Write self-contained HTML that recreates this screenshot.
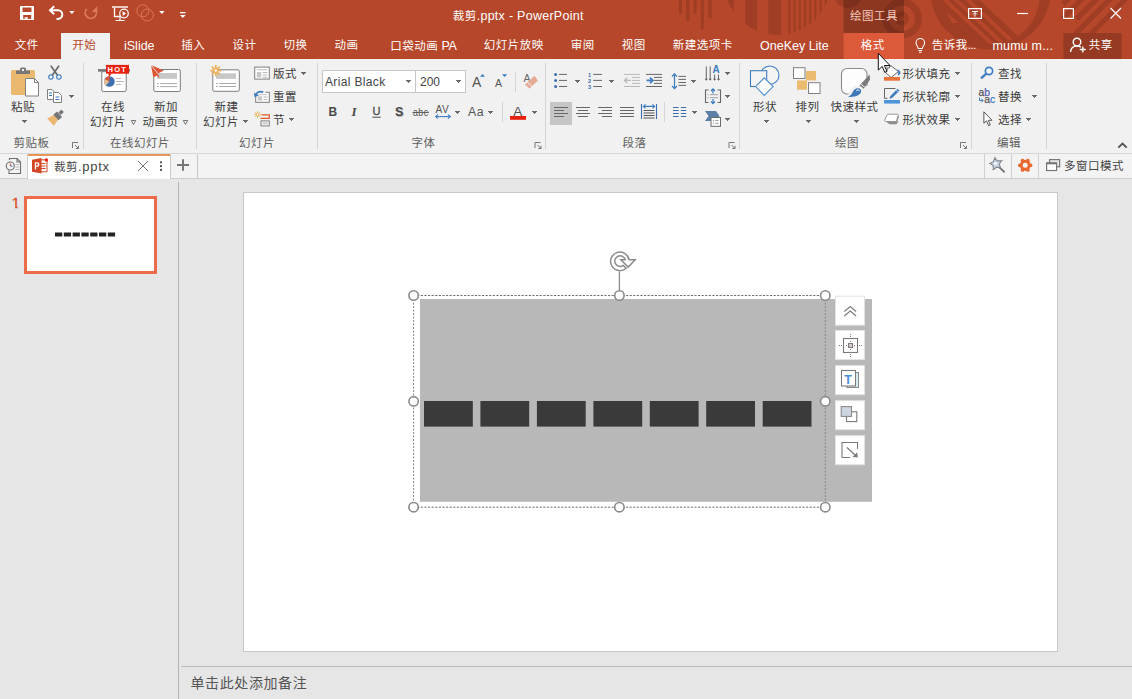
<!DOCTYPE html>
<html><head><meta charset="utf-8">
<style>
*{box-sizing:border-box;margin:0;padding:0}
html,body{width:1132px;height:699px;overflow:hidden;background:#e6e6e6}
body{position:relative;font-family:"Liberation Sans","Noto Sans CJK SC",sans-serif;font-size:11.5px;letter-spacing:.5px;color:#3b3b3b}
.abs{position:absolute}
#title{left:0;top:0;width:1132px;height:59px;background:#b7472a}
#ribbon{left:0;top:59px;width:1132px;height:94px;background:#f1f1f1}
#tabbar{left:0;top:153px;width:1132px;height:26px;background:#f3f3f3;border-top:1px solid #d6d6d6;border-bottom:1px solid #d0d0d0}
#left{left:0;top:179px;width:178px;height:520px;background:#e6e6e6}
#vdiv{left:178px;top:186px;width:1px;height:513px;background:#c6c6c6}
#slide{left:244px;top:192px;width:814px;height:459px;background:#fff;border:1px solid #cfcfcf}
#notesline{left:179px;top:666px;width:953px;height:1px;background:#cfcfcf}
.t{position:absolute;white-space:nowrap;line-height:1}
.w{color:#fff}
.l{font-size:12.5px;letter-spacing:0}
.g{color:#5e5e5e}
.sep{position:absolute;width:1px;background:#d4d4d4}
.ar{position:absolute;width:5px;height:1px;background:#6a6a6a}
.ar::before{content:"";position:absolute;left:1px;top:1px;width:3px;height:1px;background:#6a6a6a}
.ar::after{content:"";position:absolute;left:2px;top:2px;width:1px;height:1px;background:#6a6a6a}
</style></head><body>
<div id="title" class="abs">
<svg class="abs" style="left:0;top:0" width="1132" height="59" viewBox="0 0 1132 59">
 <defs>
  <clipPath id="semi"><circle cx="777.700" cy="-18.500" r="53.300"/></clipPath>
  <clipPath id="bigc"><circle cx="988" cy="-9" r="50"/></clipPath>
 </defs>
 <g fill="#9f3d25">
  <rect x="679" y="0" width="3" height="13.500"/><rect x="686.200" y="0" width="3.300" height="21"/>
  <rect x="693.700" y="0" width="3" height="13.800"/><rect x="700.800" y="0" width="3" height="29.700"/>
  <rect x="708.300" y="0" width="3.400" height="18"/>
  <g clip-path="url(#semi)">
   <rect x="725" y="0" width="8.800" height="40"/>
   <rect x="745.100" y="0" width="12" height="40"/>
   <rect x="768.400" y="0" width="12.700" height="40"/>
   <rect x="788.3" y="0" width="2.200" height="40"/><rect x="793.5" y="0" width="2.200" height="40"/><rect x="798.7" y="0" width="2.200" height="40"/><rect x="803.9" y="0" width="2.200" height="40"/><rect x="809.1" y="0" width="2.200" height="40"/><rect x="814.3" y="0" width="2.200" height="40"/><rect x="819.5" y="0" width="2.200" height="40"/><rect x="824.7" y="0" width="2.200" height="40"/>
  </g>
  <circle cx="848" cy="-7" r="15"/>
 </g>
 <!-- concentric rings -->
 <g fill="none" stroke="#9f3d25">
  <circle cx="902" cy="18.500" r="16.400" stroke-width="7"/>
  <circle cx="902" cy="18.500" r="4.700" stroke-width="4.400"/>
 </g>
 <!-- big circle -->
 <defs><clipPath id="bigi"><circle cx="991.700" cy="-3.700" r="47.800"/></clipPath></defs>
 <circle cx="990.500" cy="-11" r="60.500" fill="#9f3d25"/>
 <circle cx="991.700" cy="-3.700" r="47.800" fill="#b7472a"/>
 <g clip-path="url(#bigi)" fill="#9f3d25"><polygon points="925,23 958.500,23 1002,64 925,64"/><polygon points="907.5,-25 915.5,-25 1017.1,70 1009.1,70"/><polygon points="921.1,-25 926.7,-25 1028.3,70 1022.7,70"/><polygon points="932.2,-25 938.4,-25 1040.0,70 1033.8,70"/><polygon points="944.0,-25 952.6,-25 1054.2,70 1045.6,70"/></g>
 <!-- right stripes -->
 <g stroke="#9f3d25" stroke-width="5.200"><line x1="1073.2" y1="-6" x2="1063.1" y2="4.1"/><line x1="1087.0" y1="-6" x2="1062.1" y2="18.9"/><line x1="1101.5" y1="-6" x2="1076.6" y2="18.9"/><line x1="1115.3" y1="-6" x2="1064.3" y2="45.0"/><line x1="1130.6" y1="-6" x2="1079.6" y2="45.0"/></g>
 <!-- drawing tools band -->
 <rect x="843.500" y="0" width="60.500" height="33" fill="#000" opacity=".22"/>
 <rect x="843.500" y="33" width="60.500" height="26" fill="#dc5939"/>
 <!-- active tab -->
 <rect x="61" y="33" width="49" height="26" fill="#f1f1f1"/>
 <!-- share btn -->
 <rect x="1063.400" y="33" width="58.200" height="26" fill="#973a24"/>
 <!-- QAT icons -->
 <rect x="20" y="6" width="14" height="14" rx=".8" fill="#fff"/>
 <rect x="22.500" y="7.500" width="9" height="4.500" fill="#b7472a"/>
 <rect x="23.200" y="15" width="8" height="3.900" fill="#b7472a"/>
 <rect x="24.700" y="17.200" width="3" height="1.700" fill="#fff"/>
 <g fill="none" stroke="#fff">
  <path d="M50.500 10.300h7.500a4.300 4.300 0 0 1 0 8.600h-1.500" stroke-width="2"/><path d="M54.200 6.300l-4.200 4 4.200 4" stroke-width="2"/>
  <g stroke="#dc7a5f"><path d="M86.800 8.800a5.600 5.600 0 1 0 8.700 .9" stroke-width="1.800"/><path d="M97.300 6.300v5.600h-5.600z" fill="#dc7a5f" stroke="none"/></g>
  <path d="M112 7h16" stroke-width="1.400"/><path d="M114.500 7.500v9h6" stroke-width="1.300"/><path d="M120 17v3.500M115.500 20.500h9" stroke-width="1.200"/>
  <circle cx="124" cy="13.500" r="4.300" stroke-width="1.200"/>
  <g stroke="#dd7a5e" stroke-width=".9"><circle cx="142.800" cy="10.800" r="6"/><circle cx="147.300" cy="15" r="6"/></g>
 </g>
 <g fill="#fff">
  <path d="M69.200 11h5.400l-2.700 3.100z"/><path d="M159.200 11h5.400l-2.700 3.100z"/>
  <path d="M180 12h5.600v1.300H180z"/><path d="M180 15h5.600l-2.800 3z"/>
  <path d="M122.600 11.300l3.600 2.200-3.600 2.200z"/>
 </g>
 <!-- window controls -->
 <g fill="none" stroke="#fff" stroke-width="1.2">
  <rect x="968.600" y="8.600" width="12.800" height="9.800"/><path d="M972 11.500h6" stroke-width="1.100"/><path d="M975 16.500v-4M973 14.500l2-2 2 2" stroke-width="1"/>
  <path d="M1017 13.5h11"/>
  <rect x="1063.6" y="8.6" width="9.8" height="9.8"/>
  <path d="M1110.5 8l10.5 10.5M1121 8l-10.5 10.5"/>
 </g>
 <!-- bulb -->
 <g fill="none" stroke="#fff" stroke-width="1.1">
  <path d="M918.3 48.5c0-2-2.3-2.8-2.3-5.7a4.3 4.3 0 0 1 8.6 0c0 2.900-2.300 3.700-2.300 5.700z"/><path d="M918.500 50.500h3.600M919 52.300h2.600"/>
 </g>
 <!-- share icon -->
 <g fill="none" stroke="#fff" stroke-width="1.4">
  <circle cx="1077" cy="42" r="3.8"/><path d="M1070.500 52c.4-4 3-6 6.500-6 1.500 0 2.800.4 3.800 1.200"/><path d="M1082.800 46.500v6M1079.800 49.500h6" stroke-width="1.3"/>
 </g>
</svg>
<span class="t w" style="left:452.700px;top:10px">裁剪<span style="font-size:12.500px;letter-spacing:.27px">.pptx - PowerPoint</span></span>
<span class="t" style="left:850px;top:10.500px;color:#f3c9bd">绘图工具</span>
<span class="t w" style="left:14.700px;top:40px">文件</span>
<span class="t" style="left:72.300px;top:40px;color:#b7472a">开始</span>
<span class="t w l" style="left:124px;top:40px">iSlide</span>
<span class="t w" style="left:181.300px;top:40px">插入</span>
<span class="t w" style="left:232.500px;top:40px">设计</span>
<span class="t w" style="left:283.500px;top:40px">切换</span>
<span class="t w" style="left:334.500px;top:40px">动画</span>
<span class="t w" style="left:390.300px;top:40px">口袋动画<span class="l" style="letter-spacing:-.3px"> PA</span></span>
<span class="t w" style="left:483.700px;top:40px">幻灯片放映</span>
<span class="t w" style="left:570.700px;top:40px">审阅</span>
<span class="t w" style="left:621.700px;top:40px">视图</span>
<span class="t w" style="left:672.700px;top:40px">新建选项卡</span>
<span class="t w l" style="left:760px;top:40px">OneKey Lite</span>
<span class="t w" style="left:860.700px;top:40px">格式</span>
<span class="t w" style="left:931.700px;top:40px">告诉我<span style="letter-spacing:-.4px">...</span></span>
<span class="t w l" style="left:992.500px;top:40px;letter-spacing:.18px">mumu m...</span>
<span class="t w" style="left:1088.700px;top:40px">共享</span>
</div>
<div id="ribbon" class="abs"></div>
<!--RIBTEXT-->
<i class="sep" style="left:83px;top:63px;height:86px"></i>
<i class="sep" style="left:196px;top:63px;height:86px"></i>
<i class="sep" style="left:317px;top:63px;height:86px"></i>
<i class="sep" style="left:545px;top:63px;height:86px"></i>
<i class="sep" style="left:739px;top:63px;height:86px"></i>
<i class="sep" style="left:971px;top:63px;height:86px"></i>
<i class="sep" style="left:1046px;top:63px;height:86px"></i>
<i class="sep" style="left:515px;top:72px;height:20px"></i>
<i class="sep" style="left:502px;top:102px;height:20px"></i>
<i class="sep" style="left:664px;top:102px;height:20px"></i>
<span class="t g" style="left:13.5px;top:138px">剪贴板</span>
<span class="t g" style="left:110px;top:138px">在线幻灯片</span>
<span class="t g" style="left:239px;top:138px">幻灯片</span>
<span class="t g" style="left:411.5px;top:138px">字体</span>
<span class="t g" style="left:622.5px;top:138px">段落</span>
<span class="t g" style="left:835px;top:138px">绘图</span>
<span class="t g" style="left:997px;top:138px">编辑</span>
<span class="t" style="left:11px;top:102px">粘贴</span>
<i class="ar" style="left:22px;top:120px"></i>
<i class="ar" style="left:69px;top:95px"></i>
<span class="t" style="left:101px;top:102px">在线</span>
<span class="t" style="left:90px;top:117px">幻灯片</span>
<span class="t" style="left:154px;top:102px">新加</span>
<span class="t" style="left:142.5px;top:117px">动画页</span>
<span class="t" style="left:214.5px;top:102px">新建</span>
<span class="t" style="left:203px;top:117px">幻灯片</span>
<i class="ar" style="left:243px;top:120px"></i>
<span class="t" style="left:273px;top:69px">版式</span>
<i class="ar" style="left:301px;top:72px"></i>
<span class="t" style="left:273px;top:92px">重置</span>
<span class="t" style="left:273px;top:115px">节</span>
<i class="ar" style="left:289px;top:118px"></i>
<div class="abs" style="left:322px;top:70px;width:94px;height:23px;background:#fff;border:1px solid #c6c6c6"></div>
<div class="abs" style="left:415px;top:70px;width:51px;height:23px;background:#fff;border:1px solid #c6c6c6"></div>
<span class="t" style="left:325px;top:75.500px;font-size:12px;letter-spacing:.35px;color:#444">Arial Black</span>
<i class="ar" style="left:406px;top:80px"></i>
<span class="t" style="left:420px;top:75.500px;font-size:12px;letter-spacing:0;color:#444">200</span>
<i class="ar" style="left:456px;top:80px"></i>
<i class="ar" style="left:455px;top:111px"></i>
<i class="ar" style="left:488px;top:111px"></i>
<i class="ar" style="left:532px;top:111px"></i>
<div class="abs" style="left:550px;top:102px;width:22px;height:23px;background:#c6c6c6"></div>
<i class="ar" style="left:575px;top:80px"></i>
<i class="ar" style="left:609px;top:80px"></i>
<i class="ar" style="left:691px;top:80px"></i>
<i class="ar" style="left:725px;top:72px"></i>
<i class="ar" style="left:725px;top:95px"></i>
<i class="ar" style="left:725px;top:118px"></i>
<i class="ar" style="left:692px;top:111px"></i>
<span class="t" style="left:753px;top:102px">形状</span>
<i class="ar" style="left:764px;top:120px"></i>
<span class="t" style="left:795.5px;top:102px">排列</span>
<i class="ar" style="left:806px;top:120px"></i>
<span class="t" style="left:830.5px;top:102px">快速样式</span>
<i class="ar" style="left:854px;top:120px"></i>
<span class="t" style="left:902.5px;top:69px">形状填充</span>
<i class="ar" style="left:955px;top:72px"></i>
<span class="t" style="left:902.5px;top:92px">形状轮廓</span>
<i class="ar" style="left:955px;top:95px"></i>
<span class="t" style="left:902.5px;top:115px">形状效果</span>
<i class="ar" style="left:955px;top:118px"></i>
<span class="t" style="left:998px;top:69px">查找</span>
<span class="t" style="left:998px;top:92px">替换</span>
<i class="ar" style="left:1032px;top:95px"></i>
<span class="t" style="left:998px;top:115px">选择</span>
<i class="ar" style="left:1026px;top:118px"></i>
<!--/RIBTEXT-->
<!--RIBICONS--><svg class="abs" style="left:0;top:0;pointer-events:none" width="1132" height="699" viewBox="0 0 1132 699">
<!-- clipboard group -->
<g>
 <rect x="11" y="70" width="24" height="25" rx="1.5" fill="#eab96f"/>
 <path d="M16 74v-3.500h4v-1.500a1.500 1.500 0 0 1 1.500-1.500h3a1.500 1.500 0 0 1 1.500 1.500v1.500h4V74z" fill="#787878"/>
 <rect x="22" y="69" width="2" height="2" fill="#f1f1f1"/>
 <path d="M25.500 78.500h9l4 4v13.500h-13z" fill="#fff" stroke="#808080" stroke-width="1"/>
 <path d="M34.500 78.500v4h4" fill="none" stroke="#808080" stroke-width="1"/>
 <!-- scissors -->
 <path d="M50.800 65.800l6.700 9.400M59 65.800l-6.700 9.400" stroke="#6a6a6a" stroke-width="1.700" fill="none"/>
 <circle cx="50.900" cy="77" r="2.200" fill="none" stroke="#3a7bbf" stroke-width="1.100"/>
 <circle cx="58.900" cy="77" r="2.200" fill="none" stroke="#3a7bbf" stroke-width="1.100"/>
 <!-- copy -->
 <path d="M47.500 89.500h4.500l2.500 2.500v7.500h-7z" fill="#fff" stroke="#808080"/>
 <path d="M53.500 92.500h5l3 3v7h-8z" fill="#fff" stroke="#808080"/>
 <path d="M49 93h3M49 95.500h3M55.500 97h4M55.500 99.500h4" stroke="#3a7bbf" stroke-width="1" fill="none"/>
 <!-- format painter -->
 <path d="M47.200 118.400l6.600-3.300 4.400 4.600-4.400 6z" fill="#ecb76f"/>
 <path d="M53.300 114.800l3.600-3.400 5.200 5.500-3.600 3.400z" fill="#777"/>
 <path d="M58.400 112.400l3-2.800 2.400 2.500-3 2.800z" fill="#777"/>
</g>
<!-- online slides -->
<g>
 <rect x="98" y="69" width="32" height="2.700" fill="#7d7d7d"/>
 <path d="M101.800 71.700v18.300a1.500 1.500 0 0 0 1.500 1.500h21.400a1.500 1.500 0 0 0 1.500-1.500v-18.300z" fill="#fff" stroke="#7d7d7d" stroke-width="1"/>
 <circle cx="109.400" cy="81.500" r="5.300" fill="#3f6fb0"/>
 <path d="M109.400 81.500l-5.200 1.200a5.300 5.300 0 0 1 .5-3.700z" fill="#f0c48c"/>
 <path d="M109.400 81.500l-5.250 1.200a5.300 5.300 0 0 0 1.600 2.700z" fill="#f0c48c"/>
 <path d="M109.400 81.500l-4.700-2.500a5.300 5.300 0 0 1 5.300-2.770z" fill="#d9593a"/>
 <path d="M116 78.500h5M116 81.500h8M116 84.500h5" stroke="#bdbdbd" stroke-width="1" fill="none"/>
 <path d="M106 64.900h23v8.800h-23z" fill="#e8210e"/>
 <path d="M108.400 73.500h3.300l-2.800 3.400z" fill="#e8210e"/>
</g>
<!-- new animation page -->
<g>
 <rect x="153.800" y="69.500" width="26.500" height="22" rx="1.500" fill="#fff" stroke="#7d7d7d"/>
 <rect x="157" y="73" width="20" height="5.800" fill="#c8c8c8"/>
 <path d="M157 83.600h1.800M160.200 83.600h16.800M157 86.600h1.800M160.200 86.600h16.800" stroke="#a9a9a9" stroke-width="1" fill="none"/>
 <path d="M151 64.900l12.800 5.500-4.800 2.600-1.100 .8 1.900 4.400-3-2.600-1.300 .9-2.300 .6z" fill="#dd5534"/>
 <path d="M151 64.900l6.900 8.900" stroke="#f1f1f1" stroke-width=".8"/>
</g>
<!-- hollow dropdown triangles -->
<g fill="none" stroke="#666" stroke-width=".9"><path d="M131.300 120.500h4.400l-2.200 4z"/><path d="M183.300 120.500h4.400l-2.200 4z"/></g>
<!-- new slide -->
<g>
 <rect x="212.800" y="69.800" width="26.500" height="21.500" rx="1.500" fill="#fff" stroke="#7d7d7d"/>
 <rect x="216" y="73.300" width="20" height="5.600" fill="#c8c8c8"/>
 <path d="M216 83.500h1.800M219.200 83.500h16.800M216 86.500h1.800M219.200 86.500h16.800" stroke="#a9a9a9" stroke-width="1" fill="none"/>
 <g stroke="#eeb05c" stroke-width="1.800"><path d="M215.800 65v11.200M210.200 70.600h11.200M211.800 66.600l8 8M219.800 66.600l-8 8"/></g>
 <circle cx="215.800" cy="70.600" r="1.600" fill="#fff" stroke="#eeb05c" stroke-width=".8"/>
</g>
<!-- layout -->
<g>
 <rect x="254.700" y="67.100" width="14.600" height="12" fill="#fff" stroke="#7d7d7d"/>
 <path d="M256.800 69.700h10.500" stroke="#c0c0c0" stroke-width="1"/>
 <rect x="256.800" y="72" width="4.400" height="5.500" fill="#c8c8c8"/>
 <path d="M262.700 72.500h4.600M262.700 75h4.600M262.700 77.300h4.600" stroke="#b0b0b0" stroke-width=".9"/>
</g>
<!-- reset -->
<g>
 <rect x="255.700" y="92.300" width="13.600" height="10" fill="#fff" stroke="#7d7d7d"/>
 <path d="M258 94.700h9" stroke="#c0c0c0"/><rect x="257.700" y="96.300" width="4.500" height="4.300" fill="#c8c8c8"/>
 <path d="M263.500 97h4M263.500 99.500h4" stroke="#b0b0b0" stroke-width=".9"/>
 <path d="M253.500 89.500h12v4h-8v3h-4z" fill="#f1f1f1"/>
 <path d="M256 95.500c.5-3 3.500-5 7.200-3.200" fill="none" stroke="#3a7bbf" stroke-width="1.700"/>
 <path d="M254 92.600l.6 4.600 4.200-1.800z" fill="#3a7bbf"/>
</g>
<!-- section -->
<g>
 <g stroke="#eeb05c" stroke-width="1"><path d="M257.600 111.200v6.800M254.200 114.600h6.800M255.200 112.200l4.800 4.800M260 112.200l-4.800 4.800"/></g>
 <circle cx="257.600" cy="114.600" r="1" fill="#fff"/>
 <path d="M261.500 114.900h7.800v3.400h-8.800" fill="none" stroke="#e05a2b" stroke-width="1.200"/>
 <rect x="261" y="120.900" width="8.300" height="5" fill="#fff" stroke="#7d7d7d"/>
 <rect x="262.500" y="122.300" width="5.300" height="2" fill="#c8c8c8"/>
</g>
<!-- font group -->
<g font-family="Liberation Sans, sans-serif" fill="#555">
 <text x="472" y="87" font-size="14">A</text>
 <path d="M480 76.800l2.500-2.800 2.500 2.800z" fill="#3e7cc0"/>
 <text x="495" y="87" font-size="10.500">A</text>
 <path d="M502 74.200h5.200l-2.600 2.800z" fill="#3e7cc0"/>
 <text x="523.500" y="82" font-size="10.500" fill="#666">A</text>
 <path d="M534.400 75.800l3.600 4.700-8.400 8-4.700-3.700z" fill="#e5ab97"/>
 <path d="M527.400 82.300l4.600 4" stroke="#f1f1f1" stroke-width=".9"/>
 <text x="328.600" y="115.500" font-size="12" font-weight="bold" fill="#4a4a4a">B</text>
 <text x="351.500" y="115.500" font-size="13" font-weight="bold" font-style="italic" font-family="Liberation Serif, serif" fill="#4a4a4a">I</text>
 <text x="372.400" y="114.700" font-size="11" fill="#4a4a4a" stroke="#4a4a4a" stroke-width=".3">U</text>
 <path d="M372.400 117.200h8.300" stroke="#4a4a4a" stroke-width="1"/>
 <text x="395.800" y="117" font-size="12.500" font-weight="bold" fill="#b5b5b5">S</text>
 <text x="395" y="116" font-size="12.500" font-weight="bold" fill="#4a4a4a">S</text>
 <text x="413" y="116" font-size="10" fill="#555" textLength="15.500" lengthAdjust="spacingAndGlyphs">abc</text>
 <path d="M412.500 112.500h16.500" stroke="#555" stroke-width=".9"/>
 <text x="435.500" y="112.800" font-size="10.300" fill="#555" textLength="13.800" lengthAdjust="spacingAndGlyphs">AV</text>
 <path d="M436 116.600h14" stroke="#3e7cc0" stroke-width="1.100"/>
 <path d="M438 114.600l-2.300 2 2.300 2M448 114.600l2.300 2-2.300 2" fill="none" stroke="#3e7cc0" stroke-width="1.100"/>
 <text x="468" y="116" font-size="12.300" fill="#555">Aa</text>
 <text x="513.200" y="115.600" font-size="13.500" fill="#555">A</text>
 <rect x="510" y="116" width="16" height="3.800" fill="#e8210e"/>
</g>
<!-- paragraph group -->
<g fill="none" stroke="#666" stroke-width="1">
 <g fill="#3e6fb0" stroke="none"><circle cx="555.600" cy="74.400" r="1.500"/><circle cx="555.600" cy="80.400" r="1.500"/><circle cx="555.600" cy="86.500" r="1.500"/></g>
 <path d="M559 74.400h8M559 80.400h8M559 86.500h8"/>
 <g font-family="Liberation Sans, sans-serif" font-size="5.500" font-weight="bold" fill="#3e6fb0" stroke="none"><text x="588" y="76.500">1</text><text x="588" y="82.500">2</text><text x="588" y="88.600">3</text></g>
 <path d="M593.200 74.400h8.800M593.200 80.400h8.800M593.200 86.500h8.800"/>
 <g stroke="#b9b9b9"><path d="M624 74.400h16M632 77.400h8M632 80.400h8M632 83.400h8M624 86.500h16"/><path d="M631 80.400h-6.500M627.300 77.800l-2.800 2.600 2.800 2.600" stroke-width="1.400"/></g>
 <path d="M646 74.400h16M654 77.400h8M654 80.400h8M654 83.400h8M646 86.500h16"/>
 <path d="M646.500 80.400h6M650 77.600l2.900 2.800-2.900 2.800" stroke="#3e7cc0" stroke-width="1.600"/>
 <!-- line spacing -->
 <path d="M674.500 74v14.500M672 76.500l2.500-2.700 2.500 2.700M672 86l2.500 2.700 2.500-2.700" stroke="#3e7cc0" stroke-width="1.200"/>
 <path d="M678.500 76.400h7.500M678.500 79.400h7.500M678.500 82.500h7.500M678.500 85.400h7.500"/>
 <!-- text direction -->
 <path d="M706.300 66.400v13.500M710.200 66.400v13.500M714.600 74.500v5.400M718.500 74.500v5.400" stroke="#666" stroke-width="1"/>
 <path d="M704.800 78.700l1.500 2 1.500-2zM708.700 78.700l1.500 2 1.500-2zM713.100 78.700l1.500 2 1.500-2zM717 78.700l1.500 2 1.500-2z" fill="#555" stroke="none"/>
 <text x="712.600" y="72.700" font-family="Liberation Sans, sans-serif" font-size="10" font-weight="bold" fill="#3e7cc0" stroke="none">A</text>
 <!-- align text -->
 <path d="M708.500 90h-3v12.500h3M717.500 90h3v12.500h-3" stroke="#666" stroke-width="1.100"/>
 <path d="M713 89v4.500M711 91l2-2.200 2 2.200M713 99v4.500M711 101.500l2 2.200 2-2.200" stroke="#3e7cc0" stroke-width="1.200"/>
 <path d="M707.500 94.700h1.200M710 94.700h8M707.500 97.700h1.200M710 97.700h8" stroke="#999" stroke-width=".9"/>
 <!-- smartart -->
 <path d="M705 111h11l3.500 5-3.500 5h-11l3.500-5z" fill="#5b7fa6" stroke="none"/>
 <rect x="711" y="117.500" width="9.500" height="8.800" fill="#fff" stroke="#6a6a6a"/>
 <path d="M713 120.500h1.200M715.200 120.500h3.500M713 123.300h1.200M715.200 123.300h3.500" stroke="#999" stroke-width=".9"/>
 <!-- align row -->
 <path d="M554 107.500h14M554 110.500h10M554 113.500h14M554 116.500h10" stroke="#666"/>
 <path d="M576 107.500h14M578 110.500h10M576 113.500h14M578 116.500h10"/>
 <path d="M598 107.500h14M602 110.500h10M598 113.500h14M602 116.500h10"/>
 <path d="M620 107.500h14M620 110.500h14M620 113.500h14M620 116.500h14"/>
 <path d="M641.500 104v15M656.500 104v15" stroke="#3e6fb0" stroke-width="1.100"/>
 <path d="M643.500 106.400h11M645.500 104.400l-2.200 2 2.200 2M652.500 104.400l2.200 2-2.200 2" stroke="#3e7cc0" stroke-width="1.100"/>
 <path d="M643.500 110.500h11M643.500 113h11M643.500 115.500h11M643.500 118h11" stroke="#555" stroke-width="1.100"/>
 <path d="M673 107.500h5.700M673 110.500h5.700M673 113.500h5.700M673 116.500h5.700M680.800 107.500h5.400M680.800 110.500h5.400M680.800 113.500h5.400M680.800 116.500h5.400" stroke="#3e6fb0" stroke-width="1.100"/>
</g>
<!-- shapes -->
<g stroke="#3e7cc0" stroke-width="1.100" fill="#f4f4f4">
 <circle cx="769.800" cy="75.200" r="9.200"/>
 <rect x="750.500" y="70.700" width="16.200" height="15.800"/>
 <path d="M764.300 77.800l8.800 8.800-8.800 8.800-8.800-8.800z" stroke="#4f8fd0" fill="#fcfcfc"/>
</g>
<!-- arrange -->
<g>
 <rect x="806" y="71" width="10" height="9.400" fill="#ebbb70"/><rect x="797" y="80.400" width="10" height="9.300" fill="#ebbb70"/>
 <rect x="793.500" y="67.700" width="11.500" height="10.800" fill="#fff" stroke="#808080"/>
 <rect x="808.500" y="82.700" width="11.500" height="10.800" fill="#fff" stroke="#808080"/>
</g>
<!-- quick styles -->
<g>
 <rect x="841.500" y="68.500" width="25.500" height="25.500" rx="5.500" fill="#fdfdfd" stroke="#8a8a8a" stroke-width="1.100"/>
 <path d="M850 90.500l4-4.500h14l2 -4v16h-23z" fill="#f1f1f1"/>
 <path d="M869.600 74.600l.4 5.200-6.200 8.900-4.300-3.300z" fill="#7a7a7a"/>
 <path d="M860.300 83.700l4.500 3.500" stroke="#f1f1f1" stroke-width="1"/>
 <path d="M848 96.900c3.500-1.400 4.500-4.900 6-6.900 1.500-2 5-2.500 6.600-.8 1.400 1.800 .4 4.300-2.100 5.800-3 1.700-7 2.200-10.500 1.900z" fill="#3f78b8"/>
 <path d="M856.300 90.600c1-1 2.500-.9 3.200 .2" stroke="#fff" stroke-width="1" fill="none"/>
</g>
<!-- shape fill -->
<g>
 <path d="M884.500 71.500l6.500-5.700 7.500 5.700-7.500 6z" fill="#fff" stroke="#666" stroke-width="1"/>
 <path d="M887 66.500v4.500M889.500 65.500v3" stroke="#666" stroke-width=".8" fill="none"/>
 <path d="M897.300 69.300c2.300 1 3.600 2.600 3 4.300-.4 1.200-1.500 1.800-2.600 1.500.8-1.800.6-3.800-.4-5.800z" fill="#3e7cc0"/>
 <rect x="884" y="77" width="16" height="3.700" fill="#e8733a"/>
</g>
<!-- shape outline -->
<g>
 <path d="M895.500 88.500h-11v9.800h3" fill="none" stroke="#666" stroke-width="1"/>
 <path d="M897.500 88.800l2 2-7.200 7-3 1.200 1.100-3.100z" fill="#3e7cc0"/>
 <path d="M896.300 90l2 2" stroke="#f1f1f1" stroke-width=".7"/>
 <rect x="884" y="100" width="16" height="3.600" fill="#4f95d9"/>
</g>
<!-- shape effects -->
<g>
 <path d="M886 121.500l3.500 2.800h7l2-2.800z" fill="#8c8c8c"/>
 <path d="M896.500 124.300l2.500-7.500-1-2.300-1.500 1.500z" fill="#9a9a9a"/>
 <path d="M888 114.200h9.500c.7 0 1 .5.800 1.200l-2 6.100h-10.800c-.8 0-1.100-.6-.8-1.300l2.300-5.200c.2-.5.500-.8 1-.8z" fill="#fff" stroke="#8a8a8a" stroke-width=".9"/>
</g>
<!-- find -->
<g fill="none" stroke="#3e7cc0">
 <circle cx="989" cy="71" r="3.600" stroke-width="1.700" fill="#f7f9fc"/>
 <path d="M986.300 73.700l-5.300 4.600" stroke-width="2.300"/>
</g>
<!-- replace -->
<g font-family="Liberation Sans, sans-serif" font-size="10.300" stroke-width=".25">
 <text x="978.600" y="95.500" fill="#555" stroke="#555">a</text><text x="984.300" y="95.500" fill="#5a5fb5" stroke="#5a5fb5">b</text>
 <text x="984.200" y="103" fill="#555" stroke="#555">a</text><text x="989.900" y="103" fill="#3e7cc0" stroke="#3e7cc0">c</text>
 <path d="M979.500 97.500v3h3.500M981.500 99l1.800 1.500-1.800 1.500" fill="none" stroke="#3e7cc0" stroke-width="1"/>
</g>
<!-- select -->
<path d="M983.900 111.800v11.400l2.700-2.300 2 4.700 1.700-.7-2-4.600h3.700z" fill="#fff" stroke="#555" stroke-width="1"/>
<!-- dialog launchers -->
<g fill="none" stroke="#777" stroke-width="1">
 <g id="dl"><path d="M72.500 148v-5.500h5.500"/><path d="M75 145l3.500 3.500M78.500 145.800v2.700h-2.700" /></g>
 <use href="#dl" x="462.500"/><use href="#dl" x="656.500"/><use href="#dl" x="888"/>
</g>
<!-- collapse chevron -->
<path d="M1118.300 147.700l4.200-4.200 4.200 4.200" fill="none" stroke="#555" stroke-width="1.900"/>
</svg><!--/RIBICONS-->
<span class="t hot" style="left:107.500px;top:65.800px;font-size:7.500px;font-weight:bold;color:#fff;letter-spacing:1.300px">HOT</span>

<!--DOC-->
<div class="abs" style="left:0;top:153px;width:1132px;height:26px;background:#f3f3f3;border-top:1px solid #d6d6d6;border-bottom:1px solid #cdcdcd"></div>
<div class="abs" style="left:27px;top:154px;width:1px;height:24px;background:#d0d0d0"></div>
<div class="abs" style="left:28px;top:154px;width:142px;height:25px;background:#fff;border-top:2px solid #e8975a"></div>
<div class="abs" style="left:170px;top:154px;width:1px;height:24px;background:#c9c9c9"></div>
<div class="abs" style="left:197px;top:154px;width:1px;height:24px;background:#c9c9c9"></div>
<div class="abs" style="left:984px;top:154px;width:1px;height:24px;background:#d0d0d0"></div>
<div class="abs" style="left:1011px;top:154px;width:1px;height:24px;background:#d0d0d0"></div>
<div class="abs" style="left:1038px;top:154px;width:1px;height:24px;background:#d0d0d0"></div>
<span class="t" style="left:54px;top:160px;color:#444">裁剪<span style="font-size:13px;letter-spacing:.7px">.pptx</span></span>
<span class="t" style="left:1064px;top:161px;color:#444">多窗口模式</span>
<div class="abs" style="left:178px;top:182px;width:1px;height:517px;background:#b4b4b4"></div>
<div class="abs" style="left:24px;top:196px;width:133px;height:78px;background:#fff;border:3px solid #ec6b4a"></div>
<span class="t" style="left:11.400px;top:194.600px;font-size:15.500px;letter-spacing:0;color:#d9532c;-webkit-text-stroke:.3px #d9532c;clip-path:polygon(0 0,6.200px 0,6.200px 100%,3.700px 100%,3.700px 11px,0 11px)">1</span>
<div class="abs" style="left:243px;top:192px;width:815px;height:460px;background:#fff;border:1px solid #c8c8c8"></div>
<div class="abs" style="left:181px;top:666px;width:951px;height:1px;background:#bcbcbc"></div>
<span class="t" style="left:190.500px;top:675.500px;font-size:14px;letter-spacing:.6px;color:#555">单击此处添加备注</span>
<svg class="abs" style="left:0;top:0;pointer-events:none" width="1132" height="699" viewBox="0 0 1132 699">
<!-- thumbnail dashes -->
<g fill="#222">
<rect x="55" y="232.500" width="7.300" height="4"/><rect x="63.800" y="232.500" width="7.300" height="4"/><rect x="72.600" y="232.500" width="7.300" height="4"/><rect x="81.400" y="232.500" width="7.300" height="4"/><rect x="90.200" y="232.500" width="7.300" height="4"/><rect x="99" y="232.500" width="7.300" height="4"/><rect x="107.800" y="232.500" width="7.300" height="4"/>
</g>
<!-- history icon -->
<g fill="none" stroke="#6e6e6e" stroke-width="1.100">
 <path d="M9.500 160v-1.500h7.500l3.500 3.500v11.500h-11.500v-3"/><path d="M17 158.500v3.500h3.500"/>
 <circle cx="10.300" cy="166" r="4" fill="#f3f3f3"/>
 <path d="M15.500 164.500h3.500M15.500 167h3.500M15.500 169.500h3.500" stroke="#bbb"/>
 <path d="M10.300 163.500v2.500" stroke="#d9532c"/><path d="M10.300 166h2.200" stroke="#3e7cc0"/>
</g>
<!-- ppt icon -->
<g>
 <path d="M39.500 159.800h7.500v12h-7.500z" fill="#fff" stroke="#d24726" stroke-width="1"/>
 <path d="M41 163.500h4.500M41 166h4.500M41 168.500h4.500" stroke="#d24726" stroke-width="1"/>
 <path d="M32 159.800l9.500-1.800v15.600l-9.500-1.800z" fill="#d24726"/>
 <path d="M34.800 169.500v-7.200h2.300c1.500 0 2.300.9 2.300 2.200 0 1.400-1 2.300-2.400 2.300h-.9v2.700zM36.100 163.400v2.300h.8c.8 0 1.200-.4 1.200-1.200 0-.7-.4-1.100-1.200-1.100z" fill="#fff"/>
 <circle cx="46.400" cy="160" r="1.700" fill="#e8210e"/>
</g>
<!-- close X, dots, plus -->
<path d="M138 161l10 10M148 161l-10 10" stroke="#777" stroke-width="1" fill="none"/>
<g fill="#555"><rect x="160" y="161.300" width="2" height="2"/><rect x="160" y="165.100" width="2" height="2"/><rect x="160" y="168.900" width="2" height="2"/></g>
<path d="M177 165h12M183 159.200v11.600" stroke="#777" stroke-width="2" fill="none"/>
<!-- wand -->
<g>
 <path d="M999 166.800l5.600 5.600" stroke="#6a6a6a" stroke-width="1.700"/>
 <polygon points="994.8,158.0 997.3,160.9 1001.2,160.9 999.3,164.2 1000.5,167.9 996.7,167.1 993.6,169.4 993.1,165.6 990.0,163.3 993.5,161.7" fill="#c9d6e3" stroke="#7d858d" stroke-width="1.100"/>
 <circle cx="995.500" cy="163.500" r="1.300" fill="#fff"/>
 <path d="M995.200 156.500v1.200M1003 160.300l-1.200 1M989.300 163.500h1.200M992.300 169.800l.8-.8" stroke="#8a8a8a" stroke-width=".8"/>
</g>
<!-- gear -->
<g>
 <circle cx="1025.200" cy="165.300" r="4" fill="none" stroke="#e8692f" stroke-width="3"/>
 <g fill="#e8692f"><circle cx="1030.50" cy="165.30" r="1.900"/><circle cx="1027.85" cy="169.89" r="1.900"/><circle cx="1022.55" cy="169.89" r="1.900"/><circle cx="1019.90" cy="165.30" r="1.900"/><circle cx="1022.55" cy="160.71" r="1.900"/><circle cx="1027.85" cy="160.71" r="1.900"/></g>
</g>
<!-- multiwindow -->
<g stroke="#777" stroke-width="1.200">
 <rect x="1049.600" y="159.600" width="10" height="7.200" fill="#e8e8e8"/>
 <rect x="1046.600" y="162.900" width="10" height="7.600" fill="#fff"/>
 <path d="M1046.600 163.400h10" stroke-width="1.800"/>
</g>
<rect x="420" y="299" width="452" height="503" fill="none"/>
<rect x="420" y="299" width="452" height="202.800" fill="#b8b8b8"/>
<g fill="#3a3a3a"><rect x="424.0" y="401" width="48.800" height="25.600"/><rect x="480.4" y="401" width="48.800" height="25.600"/><rect x="536.9" y="401" width="48.800" height="25.600"/><rect x="593.4" y="401" width="48.800" height="25.600"/><rect x="649.8" y="401" width="48.800" height="25.600"/><rect x="706.2" y="401" width="48.800" height="25.600"/><rect x="762.7" y="401" width="48.800" height="25.600"/></g>
<g fill="none" stroke="#707070" stroke-width="1">
 <path d="M413.600 295.500h411.700M413.600 507.200h411.700" stroke-dasharray="2.200 1.400"/>
 <path d="M413.600 295.500v211.700M825.300 295.500v211.700" stroke-dasharray="2 1.500" stroke="#858585"/>
</g>
<path d="M619.400 271.500v19" stroke="#8c8c8c" stroke-width="1.300"/>
<!-- rotate icon -->
<g fill="#fff" stroke="#8c8c8c" stroke-width="1.500">
 <path d="M626.200 268.200a9.300 9.300 0 1 1 2.900-8.400h3.400l2.700 0-7 7.300-7.300-7.300h4.300a5.300 5.300 0 1 0-2 5.600z"/>
</g>
<circle cx="413.6" cy="295.5" r="4.700" fill="#fff" stroke="#8a8a8a" stroke-width="1.600"/><circle cx="619.4" cy="295.5" r="4.700" fill="#fff" stroke="#8a8a8a" stroke-width="1.600"/><circle cx="825.3" cy="295.5" r="4.700" fill="#fff" stroke="#8a8a8a" stroke-width="1.600"/><circle cx="413.6" cy="401.3" r="4.700" fill="#fff" stroke="#8a8a8a" stroke-width="1.600"/><circle cx="825.3" cy="401.3" r="4.700" fill="#fff" stroke="#8a8a8a" stroke-width="1.600"/><circle cx="413.6" cy="507.2" r="4.700" fill="#fff" stroke="#8a8a8a" stroke-width="1.600"/><circle cx="619.4" cy="507.2" r="4.700" fill="#fff" stroke="#8a8a8a" stroke-width="1.600"/><circle cx="825.3" cy="507.2" r="4.700" fill="#fff" stroke="#8a8a8a" stroke-width="1.600"/>
<rect x="835.500" y="296.2" width="29" height="29" fill="#fff" stroke="#e2e2e2" stroke-width="1"/><rect x="835.500" y="330.500" width="29" height="29" fill="#fff" stroke="#e2e2e2" stroke-width="1"/><rect x="835.500" y="365.600" width="29" height="29" fill="#fff" stroke="#e2e2e2" stroke-width="1"/><rect x="835.500" y="400.700" width="29" height="29" fill="#fff" stroke="#e2e2e2" stroke-width="1"/><rect x="835.500" y="435.700" width="29" height="29" fill="#fff" stroke="#e2e2e2" stroke-width="1"/>
<!-- btn icons -->
<g fill="none" stroke="#7a7a7a" stroke-width="1.100">
 <path d="M844.300 311.500l5.900-5 5.900 5M844.300 316l5.900-5 5.900 5"/>
 <rect x="843.500" y="338.500" width="14" height="14"/>
 <rect x="848.500" y="343.500" width="4" height="4" fill="#d8cccc"/>
 <g fill="#7a7a7a" stroke="none"><rect x="850.0" y="334.0" width="1" height="1"/><rect x="850.0" y="336.0" width="1" height="1"/><rect x="850.0" y="354.0" width="1" height="1"/><rect x="850.0" y="356.0" width="1" height="1"/><rect x="839.0" y="345.0" width="1" height="1"/><rect x="841.0" y="345.0" width="1" height="1"/><rect x="859.0" y="345.0" width="1" height="1"/><rect x="861.0" y="345.0" width="1" height="1"/><rect x="850.0" y="341.0" width="1" height="1"/><rect x="850.0" y="349.0" width="1" height="1"/><rect x="846.0" y="345.0" width="1" height="1"/><rect x="854.0" y="345.0" width="1" height="1"/></g>
 <path d="M856 372.500h2.500v15h-11.500v-1.500" fill="#d9f0f5" stroke="#8a8a8a"/>
 <rect x="841.500" y="370.500" width="14" height="15.500" fill="#fff" stroke="#7a7a7a"/>
 <rect x="846.500" y="411.800" width="10.300" height="9.800"/>
 <rect x="841.200" y="406.600" width="10.300" height="9.800" fill="#cdd5e0" stroke="#8a8a8a"/>
 <path d="M857.500 449v-6.500h-15.500v15h8"/>
 <path d="M847 447.500l9 8.500" stroke-width="1.200"/>
 <path d="M857.800 457.500l-5.200-.6 4.600-4.600z" fill="#7a7a7a" stroke="none"/>
</g>
<text x="844.300" y="383.800" font-family="Liberation Sans, sans-serif" font-size="12.500" font-weight="bold" fill="#4a90d9">T</text>
<!-- cursor -->
<path d="M878.300 53.300v16.800l3.900-3.700 2.600 6 2.200-1-2.600-5.900h5.600z" fill="#fff" stroke="#111" stroke-width="1" stroke-linejoin="miter"/>

</svg>
<!--/DOC-->
</body></html>
